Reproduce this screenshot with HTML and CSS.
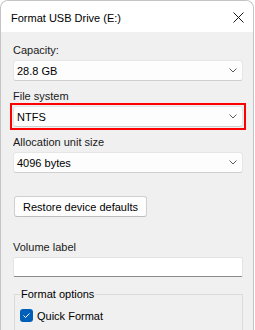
FILE: index.html
```html
<!DOCTYPE html>
<html lang="en">
<head>
    <meta charset="UTF-8">
    <meta name="viewport" content="width=device-width, initial-scale=1.0">
    <title>Format USB Drive (E:)</title>
    <link rel="stylesheet" href="styles.css">
</head>
<body>
    <div class="window">
        <div class="titlebar">
            <span class="title">Format USB Drive (E:)</span>
            <svg class="close" width="11" height="11" viewBox="0 0 11 11">
                <path d="M0.5 0.5 L10.5 10.5 M10.5 0.5 L0.5 10.5" stroke="#1a1a1a" stroke-width="1" fill="none"/>
            </svg>
        </div>

        <div class="content">
            <div class="label">Capacity:</div>
            <div class="combo">
                <span>28.8 GB</span>
                <svg class="chevron" width="8" height="5" viewBox="0 0 8 5"><path d="M0.5 0.5 L4 4 L7.5 0.5" stroke="#5c5c5c" fill="none"/></svg>
            </div>

            <div class="label">File system</div>
            <div class="highlight">
                <div class="combo">
                    <span>NTFS</span>
                    <svg class="chevron" width="8" height="5" viewBox="0 0 8 5"><path d="M0.5 0.5 L4 4 L7.5 0.5" stroke="#5c5c5c" fill="none"/></svg>
                </div>
            </div>

            <div class="label">Allocation unit size</div>
            <div class="combo">
                <span>4096 bytes</span>
                <svg class="chevron" width="8" height="5" viewBox="0 0 8 5"><path d="M0.5 0.5 L4 4 L7.5 0.5" stroke="#5c5c5c" fill="none"/></svg>
            </div>

            <button class="restore-btn">Restore device defaults</button>

            <div class="label">Volume label</div>
            <div class="textbox"></div>

            <fieldset class="options">
                <legend>Format options</legend>
                <div class="check-row">
                    <span class="checkbox">
                        <svg width="13" height="13" viewBox="0 0 13 13"><path d="M3.5 6.5 L5.5 8.5 L9.5 4.5" stroke="#ffffff" stroke-width="1" fill="none"/></svg>
                    </span>
                    <span>Quick Format</span>
                </div>
            </fieldset>
        </div>
    </div>
</body>
</html>
```

FILE: styles.css
```css
body {
    margin: 0;
    padding: 0;
    background-color: #ffffff;
    font-family: "Liberation Sans", Arial, sans-serif;
    font-size: 11px;
    color: #1a1a1a;
}
.window {
    width: 252px;
    height: 340px;
    border: 1px solid #c4c4c4;
    border-bottom: none;
    border-radius: 8px 8px 0 0;
    overflow: hidden;
    background-color: #f0f0f0;
}
.titlebar {
    height: 31px;
    background-color: #ffffff;
    display: flex;
    align-items: center;
    padding-left: 10px;
    padding-right: 9px;
}
.title {
    flex: 1;
    font-size: 11px;
    color: #000000;
    margin-top: 2px;
}
.close {
    margin-top: 2px;
}
.content {
    padding: 10px 10px 0 12px;
}
.label {
    line-height: 16px;
    margin-bottom: 2px;
}
.combo {
    height: 19px;
    background-color: #fdfdfd;
    border: 1px solid #e6e6e6;
    border-bottom-color: #cfcfcf;
    border-radius: 3px;
    display: flex;
    align-items: center;
    padding: 0 5px 0 3px;
    margin-bottom: 7px;
}
.combo span {
    flex: 1;
    color: #000000;
}
.highlight {
    border: 2px solid #ff0000;
    padding: 1px;
    margin: -3px -3px 4px -3px;
}
.highlight .combo {
    margin-bottom: 0;
}
.restore-btn {
    display: block;
    font-family: inherit;
    font-size: 11px;
    color: #000000;
    height: 21px;
    width: 133px;
    margin: 23px 0 22px 1px;
    padding: 0;
    background-color: #fdfdfd;
    border: 1px solid #d0d0d0;
    border-bottom-color: #bdbdbd;
    border-radius: 3px;
}
.textbox {
    height: 18px;
    background-color: #ffffff;
    border: 1px solid #e3e3e3;
    border-bottom-color: #8a8a8a;
    border-radius: 2px;
}
.options {
    margin: 9px 0 0 1px;
    padding: 0 5px 10px 5px;
    border: 1px solid #dadada;
}
.options legend {
    padding: 0 1px;
    line-height: 16px;
    color: #000000;
}
.check-row {
    display: flex;
    align-items: center;
    gap: 4px;
    margin-top: 7px;
    color: #000000;
}
.checkbox {
    width: 13px;
    height: 13px;
    background-color: #005fb8;
    border-radius: 3px;
    display: flex;
}
```
